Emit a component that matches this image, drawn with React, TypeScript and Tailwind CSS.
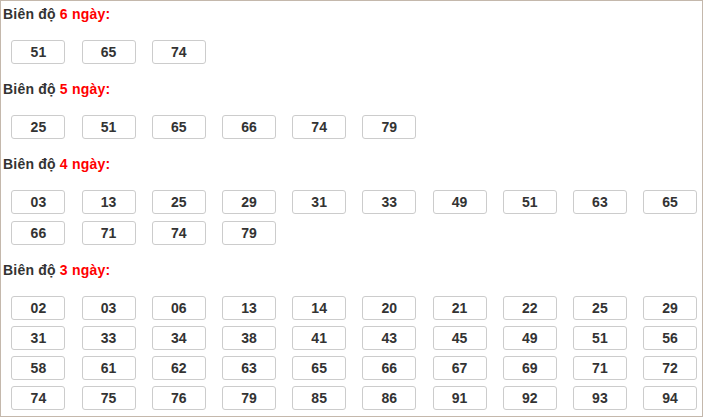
const sections: { days: number; nums: string[]; gap: string }[] = [
  { days: 6, nums: ['51', '65', '74'], gap: 'gap-y-[7px]' },
  { days: 5, nums: ['25', '51', '65', '66', '74', '79'], gap: 'gap-y-[7px]' },
  {
    days: 4,
    nums: ['03', '13', '25', '29', '31', '33', '49', '51', '63', '65', '66', '71', '74', '79'],
    gap: 'gap-y-[7px]',
  },
  {
    days: 3,
    nums: [
      '02', '03', '06', '13', '14', '20', '21', '22', '25', '29',
      '31', '33', '34', '38', '41', '43', '45', '49', '51', '56',
      '58', '61', '62', '63', '65', '66', '67', '69', '71', '72',
      '74', '75', '76', '79', '85', '86', '91', '92', '93', '94',
    ],
    gap: 'gap-y-[6px]',
  },
];

export default function App() {
  return (
    <div className="w-[703px] h-[420px] bg-white font-['Liberation_Sans',Arial,sans-serif]">
      <div className="h-[417px] border border-[#c4b8ac] pt-[3px] text-[#333]">
        {sections.map((s) => (
          <div key={s.days} className="mb-[15px]">
            <div className="pl-[2px] text-[14px] leading-[20px] font-bold tracking-[0.2px]">
              Biên độ <span className="text-[#f00]">{s.days} ngày:</span>
            </div>
            <div className={`mt-[16px] pl-[10.4px] grid grid-cols-[repeat(10,70.2px)] ${s.gap}`}>
              {s.nums.map((n, i) => (
                <div
                  key={i}
                  className="w-[54px] h-[24px] border border-[#ccc] rounded-[3px] text-center text-[14px] leading-[22px] font-bold"
                >
                  {n}
                </div>
              ))}
            </div>
          </div>
        ))}
      </div>
    </div>
  );
}
